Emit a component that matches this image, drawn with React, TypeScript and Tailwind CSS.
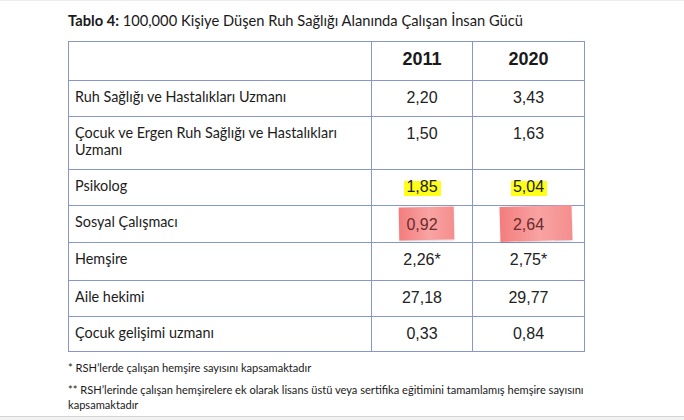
import React from "react";

const label = "font-['Lato','Open_Sans',sans-serif] text-[14.4px] leading-[17px] text-[#1c1c1c]";
const num = "font-['Liberation_Sans','Arial',sans-serif] text-[16px] leading-[17px] text-[#222]";
const cellB = "border-r border-b border-[#8797cb]";

type Row = { name: React.ReactNode; a: React.ReactNode; b: React.ReactNode; h: string };

function Yellow({ children }: { children: React.ReactNode }) {
  return (
    <span className="relative inline-block">
      <span className="absolute left-[-2px] right-[-3px] top-[3px] bottom-[-1px] bg-[#ffff1a]" />
      <span className="relative">{children}</span>
    </span>
  );
}

function Red({ children, cls }: { children: React.ReactNode; cls: string }) {
  return (
    <div className="relative h-full w-full">
      <div className={"absolute bg-[linear-gradient(90deg,#f37d7d,#f9a3a3_55%,#f58e8e)] shadow-[0_1px_2px_rgba(0,0,0,0.15)] " + cls} />
      <div className="relative pt-[10px] text-center text-[#6a2c2c]">{children}</div>
    </div>
  );
}

export default function App() {
  const rows: Row[] = [
    { name: "Ruh Sağlığı ve Hastalıkları Uzmanı", a: "2,20", b: "3,43", h: "h-[36px]" },
    { name: <>Çocuk ve Ergen Ruh Sağlığı ve Hastalıkları<br />Uzmanı</>, a: "1,50", b: "1,63", h: "h-[53px]" },
    { name: "Psikolog", a: <Yellow>1,85</Yellow>, b: <Yellow>5,04</Yellow>, h: "h-[36px]" },
    { name: "Sosyal Çalışmacı", a: "red1", b: "red2", h: "h-[37px]" },
    { name: "Hemşire", a: "2,26*", b: "2,75*", h: "h-[38px]" },
    { name: "Aile hekimi", a: "27,18", b: "29,77", h: "h-[36px]" },
    { name: "Çocuk gelişimi uzmanı", a: "0,33", b: "0,84", h: "h-[35px]" },
  ];

  return (
    <div className="w-[684px] h-[420px] bg-white relative overflow-hidden">
      <div className="h-px bg-[#ececec]" />
      <div className="pl-[68px]">
        <div className="pt-[10px] font-['Lato','Open_Sans',sans-serif] text-[14.7px] leading-[18px] text-[#1a1a1a] whitespace-nowrap">
          <span className="font-bold">Tablo 4:</span> 100,000 Kişiye Düşen Ruh Sağlığı Alanında Çalışan İnsan Gücü
        </div>
        <div className="mt-[12px] w-[517px] border-l border-t border-[#8797cb] grid grid-cols-[303px_101px_112px]">
          <div className={cellB + " h-[39px]"} />
          <div className={cellB + " h-[39px] pt-[6px] text-center font-['Liberation_Sans','Arial',sans-serif] font-bold text-[18px] leading-[22px] text-[#1a1a1a]"}>2011</div>
          <div className={cellB + " h-[39px] pt-[6px] text-center font-['Liberation_Sans','Arial',sans-serif] font-bold text-[18px] leading-[22px] text-[#1a1a1a]"}>2020</div>
          {rows.map((r, i) => (
            <React.Fragment key={i}>
              <div className={cellB + " " + r.h + " pl-[6px] pt-[7px] " + label}>{r.name}</div>
              {r.a === "red1" ? (
                <div className={cellB + " " + r.h + " " + num}>
                  <Red cls="left-[27px] top-[1px] w-[55px] h-[33px] rotate-[-1deg]">0,92</Red>
                </div>
              ) : (
                <div className={cellB + " " + r.h + " pt-[8px] text-center " + num}>{r.a}</div>
              )}
              {r.b === "red2" ? (
                <div className={cellB + " " + r.h + " " + num}>
                  <Red cls="left-[27px] top-[0px] w-[72px] h-[35px] rotate-[-1.5deg]">2,64</Red>
                </div>
              ) : (
                <div className={cellB + " " + r.h + " pt-[8px] text-center " + num}>{r.b}</div>
              )}
            </React.Fragment>
          ))}
        </div>
        <div className="w-[520px] pt-[8px] font-['Lato','Open_Sans',sans-serif] text-[11.1px] leading-[15px] text-[#1a1a1a]">
          <div>* RSH’lerde çalışan hemşire sayısını kapsamaktadır</div>
          <div className="mt-[7px]">** RSH’lerinde çalışan hemşirelere ek olarak lisans üstü veya sertifika eğitimini tamamlamış hemşire sayısını kapsamaktadır</div>
        </div>
      </div>
      <div className="absolute left-0 right-0 bottom-0 h-[4px] bg-[#f3f3f3] border-t border-[#d4d4d4]" />
    </div>
  );
}
